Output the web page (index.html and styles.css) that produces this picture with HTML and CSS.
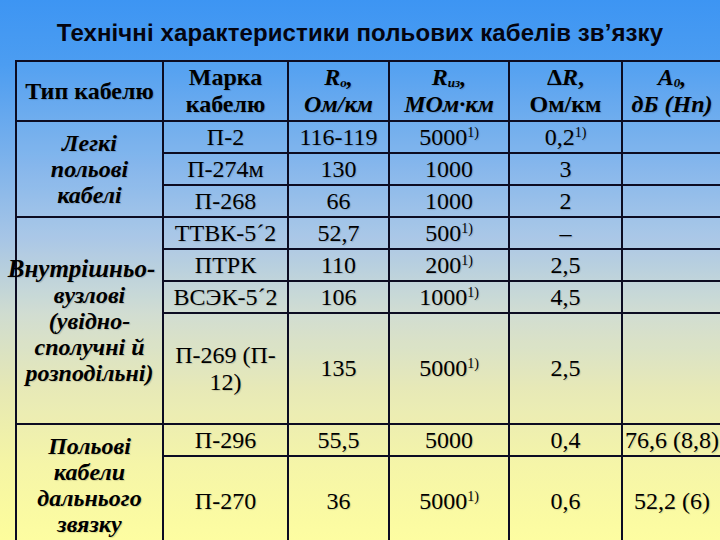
FILE: index.html
```html
<!DOCTYPE html>
<html>
<head>
<meta charset="utf-8">
<link rel="stylesheet" href="styles.css">
</head>
<body>
<div class="slide">
  <h1 class="title">Технічні характеристики польових кабелів зв’язку</h1>
  <table class="cables">
    <colgroup>
      <col class="c1"><col class="c2"><col class="c3"><col class="c4"><col class="c5"><col class="c6">
    </colgroup>
    <tr class="head">
      <th class="plain">Тип кабелю</th>
      <th class="plain">Марка<br>кабелю</th>
      <th class="ital"><i>R<sub>о</sub></i>,<br>Ом/км</th>
      <th class="ital"><i>R<sub>из</sub></i>,<br>МОм·км</th>
      <th class="plain">Δ<i>R</i>,<br>Ом/км</th>
      <th class="ital"><i>A<sub>0</sub></i>,<br>дБ (Нп)</th>
    </tr>
    <tr class="r">
      <td class="type g1" rowspan="3">Легкі<br>польові<br>кабелі</td>
      <td>П-2</td><td>116-119</td><td>5000<sup>1)</sup></td><td>0,2<sup>1)</sup></td><td></td>
    </tr>
    <tr class="r"><td>П-274м</td><td>130</td><td>1000</td><td>3</td><td></td></tr>
    <tr class="r"><td>П-268</td><td>66</td><td>1000</td><td>2</td><td></td></tr>
    <tr class="r">
      <td class="type g2" rowspan="4"><span class="wide">Внутрішньо-</span><br>вузлові<br>(увідно-<br>сполучні й<br>розподільні)</td>
      <td>ТТВК-5´2</td><td>52,7</td><td>500<sup>1)</sup></td><td>–</td><td></td>
    </tr>
    <tr class="r"><td>ПТРК</td><td>110</td><td>200<sup>1)</sup></td><td>2,5</td><td></td></tr>
    <tr class="r"><td>ВСЭК-5´2</td><td>106</td><td>1000<sup>1)</sup></td><td>4,5</td><td></td></tr>
    <tr class="tall"><td class="two">П-269 (П-<br>12)</td><td>135</td><td>5000<sup>1)</sup></td><td>2,5</td><td></td></tr>
    <tr class="r">
      <td class="type g3" rowspan="2">Польові<br>кабели<br>дальнього<br>звязку</td>
      <td>П-296</td><td>55,5</td><td>5000</td><td>0,4</td><td>76,6 (8,8)</td>
    </tr>
    <tr class="last"><td>П-270</td><td>36</td><td>5000<sup>1)</sup></td><td>0,6</td><td>52,2 (6)</td></tr>
  </table>
</div>
</body>
</html>
```

FILE: styles.css
```css
html, body {
  margin: 0;
  padding: 0;
  width: 720px;
  height: 540px;
  overflow: hidden;
}
.slide {
  width: 720px;
  height: 540px;
  overflow: hidden;
  background: linear-gradient(to bottom,
    #3d95f3 0%,
    #4c9df1 12%,
    #78b0ec 28%,
    #a6c5e6 44%,
    #cfdcd0 58%,
    #e6e8b4 72%,
    #f5f5a4 86%,
    #fdfd9c 100%);
  color: #000;
}
.title {
  margin: 0;
  height: 60px;
  box-sizing: border-box;
  padding-top: 19px;
  text-align: center;
  font-family: "Liberation Sans", Arial, sans-serif;
  font-weight: bold;
  font-size: 24px;
  line-height: 28px;
  color: #050510;
  letter-spacing: 0.1px;
}
.cables {
  margin-left: 15px;
  border-collapse: collapse;
  table-layout: fixed;
  width: 706px;
  font-family: "Liberation Serif", serif;
  font-size: 24px;
  text-shadow: 1px 1px 1px rgba(0, 0, 0, 0.15);
}
.c1 { width: 147px; }
.c2 { width: 125px; }
.c3 { width: 101px; }
.c4 { width: 120px; }
.c5 { width: 113px; }
.c6 { width: 100px; }
.cables th, .cables td {
  font-family: "Liberation Serif", serif;
  border: 2px solid #0c0c22;
  padding: 0;
  text-align: center;
  vertical-align: middle;
  white-space: nowrap;
  background: rgba(255, 255, 255, 0.05);
}
.head { height: 60px; }
.head th {
  line-height: 27px;
  font-weight: bold;
}
.head .ital { font-style: italic; }
.head sub {
  font-size: 13px;
  vertical-align: -2px;
  line-height: 0;
}
.r { height: 32px; }
.r td { line-height: 26px; }
.tall { height: 111px; }
.last { height: 90px; }
.two { line-height: 27px; }
.type {
  font-weight: bold;
  font-style: italic;
  line-height: 29px;
}
.g2 { line-height: 28px; }
.g3 { line-height: 30px; }
.wide {
  display: inline-block;
  margin-left: -16px;
  font-size: 25px;
}
sup {
  font-size: 14px;
  vertical-align: 8px;
  line-height: 0;
}
```
